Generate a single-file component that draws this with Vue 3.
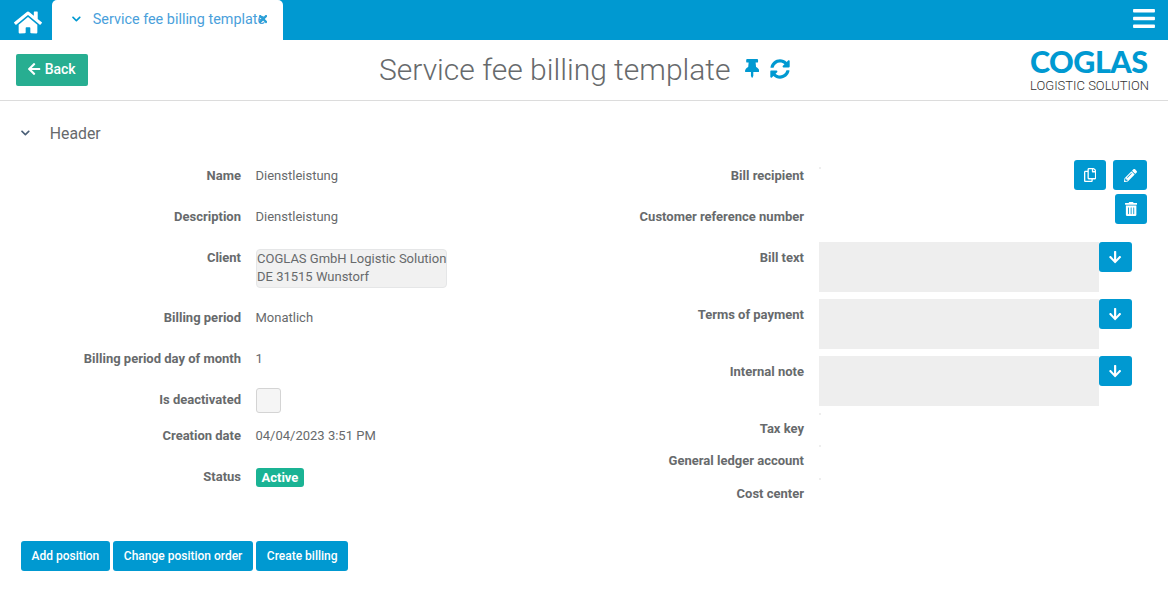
<script setup>
const I = {
  home: [576, 'M280.37 148.26L96 300.11V464a16 16 0 0 0 16 16l112.06-.29a16 16 0 0 0 15.92-16V368a16 16 0 0 1 16-16h64a16 16 0 0 1 16 16v95.64a16 16 0 0 0 16 16.05L464 480a16 16 0 0 0 16-16V300L295.67 148.26a12.19 12.19 0 0 0-15.3 0zM571.6 251.47L488 182.56V44.05a12 12 0 0 0-12-12h-56a12 12 0 0 0-12 12v72.61L318.47 43a48 48 0 0 0-61 0L4.34 251.47a12 12 0 0 0-1.6 16.9l25.5 31A12 12 0 0 0 45.15 301l235.22-193.74a12.19 12.19 0 0 1 15.3 0L530.9 301a12 12 0 0 0 16.9-1.6l25.5-31a12 12 0 0 0-1.7-16.93z'],
  bars: [448, 'M16 132h416c8.837 0 16-7.163 16-16V76c0-8.837-7.163-16-16-16H16C7.163 60 0 67.163 0 76v40c0 8.837 7.163 16 16 16zm0 160h416c8.837 0 16-7.163 16-16v-40c0-8.837-7.163-16-16-16H16c-8.837 0-16 7.163-16 16v40c0 8.837 7.163 16 16 16zm0 160h416c8.837 0 16-7.163 16-16v-40c0-8.837-7.163-16-16-16H16c-8.837 0-16 7.163-16 16v40c0 8.837 7.163 16 16 16z'],
  left: [448, 'M257.5 445.1l-22.2 22.2c-9.4 9.4-24.6 9.4-33.9 0L7 273c-9.4-9.4-9.4-24.6 0-33.9L201.4 44.7c9.4-9.4 24.6-9.4 33.9 0l22.2 22.2c9.5 9.5 9.3 25-.4 34.3L136.6 216H424c13.3 0 24 10.7 24 24v32c0 13.3-10.7 24-24 24H136.6l120.5 114.8c9.8 9.3 10 24.8.4 34.3z'],
  down: [448, 'M413.1 222.5l22.2 22.2c9.4 9.4 9.4 24.6 0 33.9L241 473c-9.4 9.4-24.6 9.4-33.9 0L12.7 278.6c-9.4-9.4-9.4-24.6 0-33.9l22.2-22.2c9.5-9.5 25-9.3 34.3.4L184 343.4V56c0-13.3 10.7-24 24-24h32c13.3 0 24 10.7 24 24v287.4l114.8-120.5c9.3-9.8 24.8-10 34.3-.4z'],
  chev: [448, 'M207.029 381.476L12.686 187.132c-9.373-9.373-9.373-24.569 0-33.941l22.667-22.667c9.357-9.357 24.522-9.375 33.901-.04L224 284.505l154.745-154.021c9.379-9.335 24.544-9.317 33.901.04l22.667 22.667c9.373 9.373 9.373 24.569 0 33.941L240.971 381.476c-9.373 9.372-24.569 9.372-33.942 0z'],
  sync: [512, 'M370.72 133.28C339.458 104.008 298.888 87.962 255.848 88c-77.458.068-144.328 53.178-162.791 126.85-1.344 5.363-6.122 9.15-11.651 9.15H24.103c-7.498 0-13.194-6.807-11.807-14.176C33.933 94.924 134.813 8 256 8c66.448 0 126.791 26.136 171.315 68.685L463.03 40.97C478.149 25.851 504 36.559 504 57.941V192c0 13.255-10.745 24-24 24H345.941c-21.382 0-32.09-25.851-16.971-40.971l41.75-41.749zM32 296h134.059c21.382 0 32.09 25.851 16.971 40.971l-41.75 41.75c31.262 29.273 71.835 45.319 114.876 45.28 77.418-.07 144.315-53.144 162.787-126.849 1.344-5.363 6.122-9.15 11.651-9.15h57.304c7.498 0 13.194 6.807 11.807 14.176C478.067 417.076 377.187 504 256 504c-66.448 0-126.791-26.136-171.315-68.685L48.97 471.03C33.851 486.149 8 475.441 8 454.059V320c0-13.255 10.745-24 24-24z'],
  pin: [384, 'M298.028 214.267L285.793 96H328c13.255 0 24-10.745 24-24V24c0-13.255-10.745-24-24-24H56C42.745 0 32 10.745 32 24v48c0 13.255 10.745 24 24 24h42.207L85.972 214.267C37.465 236.82 0 277.261 0 328c0 13.255 10.745 24 24 24h136v104.007c0 1.242.289 2.467.845 3.578l24 48c2.941 5.882 11.364 5.893 14.311 0l24-48a8.008 8.008 0 0 0 .845-3.578V352h136c13.255 0 24-10.745 24-24-.001-51.183-37.983-91.42-85.973-113.733z'],
  pencil: [512, 'M497.9 142.1l-46.1 46.1c-4.7 4.7-12.3 4.7-17 0l-111-111c-4.7-4.7-4.7-12.3 0-17l46.1-46.1c18.7-18.7 49.1-18.7 67.9 0l60.1 60.1c18.8 18.7 18.8 49.1 0 67.9zM284.2 99.8L21.6 362.4.4 483.9c-2.9 16.4 11.4 30.6 27.8 27.8l121.5-21.3 262.6-262.6c4.7-4.7 4.7-12.3 0-17l-111-111c-4.8-4.7-12.4-4.7-17.1 0zM124.1 339.9c-5.5-5.5-5.5-14.3 0-19.8l154-154c5.5-5.5 14.3-5.5 19.8 0s5.5 14.3 0 19.8l-154 154c-5.5 5.5-14.3 5.5-19.8 0zM88 424h48v36.3l-64.5 11.3-31.1-31.1L51.7 376H88v48z'],
  trash: [448, 'M32 464a48 48 0 0 0 48 48h288a48 48 0 0 0 48-48V128H32zm272-256a16 16 0 0 1 32 0v224a16 16 0 0 1-32 0zm-96 0a16 16 0 0 1 32 0v224a16 16 0 0 1-32 0zm-96 0a16 16 0 0 1 32 0v224a16 16 0 0 1-32 0zM432 32H312l-9.4-18.7A24 24 0 0 0 281.1 0H166.8a23.72 23.72 0 0 0-21.4 13.3L136 32H16A16 16 0 0 0 0 48v32a16 16 0 0 0 16 16h416a16 16 0 0 0 16-16V48a16 16 0 0 0-16-16z'],
  copy: [448, 'M433.941 65.941l-51.882-51.882A48 48 0 0 0 348.118 0H176c-26.51 0-48 21.49-48 48v48H48c-26.51 0-48 21.49-48 48v320c0 26.51 21.49 48 48 48h224c26.51 0 48-21.49 48-48v-48h80c26.51 0 48-21.49 48-48V99.882a48 48 0 0 0-14.059-33.941zM266 464H54a6 6 0 0 1-6-6V150a6 6 0 0 1 6-6h74v224c0 26.51 21.49 48 48 48h96v42a6 6 0 0 1-6 6zm128-96H182a6 6 0 0 1-6-6V54a6 6 0 0 1 6-6h106v88c0 13.255 10.745 24 24 24h88v202a6 6 0 0 1-6 6zm6-256h-64V48h9.632c1.591 0 3.117.632 4.243 1.757l48.368 48.368a6 6 0 0 1 1.757 4.243V112z'],
  times: [352, 'M242.72 256l100.07-100.07c12.28-12.28 12.28-32.19 0-44.48l-22.24-22.24c-12.28-12.28-32.19-12.28-44.48 0L176 189.28 75.93 89.21c-12.28-12.28-32.19-12.28-44.48 0L9.21 111.45c-12.28 12.28-12.28 32.19 0 44.48L109.28 256 9.21 356.07c-12.28 12.28-12.28 32.19 0 44.48l22.24 22.24c12.28 12.28 32.2 12.28 44.48 0L176 322.72l100.07 100.07c12.28 12.28 32.2 12.28 44.48 0l22.24-22.24c12.28-12.28 12.28-32.19 0-44.48L242.72 256z']
}
const vb = (k) => `0 0 ${I[k][0]} 512`
const textRows = ['Bill text', 'Terms of payment', 'Internal note']
const lowerRows = ['Tax key', 'General ledger account', 'Cost center']
</script>

<template>
  <div class="page">
    <div class="topbar">
      <button class="home" type="button" aria-label="Home">
        <svg :viewBox="vb('home')" class="ic-home"><path :d="I.home[1]" /></svg>
      </button>
      <div class="tab">
        <svg :viewBox="vb('chev')" class="ic-tabchev"><path :d="I.chev[1]" /></svg>
        <span class="tab-text">Service fee billing template</span>
        <svg :viewBox="vb('times')" class="ic-tabx"><path :d="I.times[1]" /></svg>
      </div>
      <svg :viewBox="vb('bars')" class="ic-bars"><path :d="I.bars[1]" /></svg>
    </div>

    <header class="head">
      <button class="back" type="button">
        <svg :viewBox="vb('left')" class="ic-back"><path :d="I.left[1]" /></svg>
        <span>Back</span>
      </button>
      <div class="title-wrap">
        <h1>Service fee billing template</h1>
        <svg :viewBox="vb('pin')" class="ic-pin"><path :d="I.pin[1]" /></svg>
        <svg :viewBox="vb('sync')" class="ic-refresh"><path :d="I.sync[1]" /></svg>
      </div>
      <div class="logo">
        <div class="logo-main">COGLAS</div>
        <div class="logo-sub">LOGISTIC SOLUTION</div>
      </div>
    </header>

    <div class="section-head">
      <svg :viewBox="vb('chev')" class="ic-secchev"><path :d="I.chev[1]" /></svg>
      <span>Header</span>
    </div>

    <div class="form">
      <div class="col-left">
        <div class="row"><label>Name</label><span class="val">Dienstleistung</span></div>
        <div class="row"><label>Description</label><span class="val">Dienstleistung</span></div>
        <div class="row row-client">
          <label>Client</label>
          <div class="client">COGLAS GmbH Logistic Solution<br />DE 31515 Wunstorf</div>
        </div>
        <div class="row"><label>Billing period</label><span class="val">Monatlich</span></div>
        <div class="row"><label>Billing period day of month</label><span class="val">1</span></div>
        <div class="row row-check"><label>Is deactivated</label><span class="check"></span></div>
        <div class="row"><label>Creation date</label><span class="val">04/04/2023 3:51 PM</span></div>
        <div class="row"><label>Status</label><span class="badge">Active</span></div>
      </div>

      <div class="col-right">
        <div class="top-block">
          <div class="top-rows">
            <div class="rrow"><label>Bill recipient</label><span class="dot"></span></div>
            <div class="rrow"><label>Customer reference number</label></div>
          </div>
          <div class="actions">
            <button class="sq copy" type="button"><svg :viewBox="vb('copy')"><path :d="I.copy[1]" /></svg></button>
            <button class="sq edit" type="button"><svg :viewBox="vb('pencil')" class="ic-pencil"><path :d="I.pencil[1]" /></svg></button>
            <button class="sq del" type="button"><svg :viewBox="vb('trash')"><path :d="I.trash[1]" /></svg></button>
          </div>
        </div>
        <div v-for="r in textRows" :key="r" class="trow">
          <label>{{ r }}</label>
          <div class="tbox"></div>
          <button class="sq arrow" type="button"><svg :viewBox="vb('down')"><path :d="I.down[1]" /></svg></button>
        </div>
        <div v-for="l in lowerRows" :key="l" class="lrow">
          <label>{{ l }}</label><span class="dot"></span>
        </div>
      </div>
    </div>

    <div class="footer-btns">
      <button type="button">Add position</button>
      <button type="button">Change position order</button>
      <button type="button">Create billing</button>
    </div>
  </div>
</template>

<style>
html, body { margin: 0; background: #fff; }
</style>

<style scoped>
.page {
  width: 1168px;
  height: 590px;
  overflow: hidden;
  font-family: Roboto, "Liberation Sans", sans-serif;
  font-size: 13px;
  color: #676a6c;
  background: #fff;
}
button { font-family: inherit; border: 0; cursor: pointer; padding: 0; }
svg { display: block; fill: currentColor; }
label { font-weight: 700; color: #676a6c; }

.topbar {
  height: 40px;
  background: #0099d1;
  display: flex;
  align-items: flex-start;
  color: #fff;
}
.home { width: 52px; height: 40px; background: transparent; color: #fff; padding: 5px 0 0 14px; box-sizing: border-box; }
.ic-home { width: 28px; height: 25px; }
.tab {
  width: 231px;
  height: 40px;
  background: #fff;
  border-radius: 5px 5px 0 0;
  display: flex;
  align-items: flex-start;
  color: #0099d1;
  position: relative;
}
.ic-tabchev { width: 8.75px; height: 10px; margin: 14px 0 0 20px; flex: none; }
.tab-text { margin: 11px 0 0 12px; font-size: 14.4px; line-height: 17px; color: #4a9fdb; white-space: nowrap; }
.ic-tabx { width: 8.25px; height: 12px; position: absolute; left: 206.5px; top: 13px; color: #2a9fd6; }
.ic-bars { width: 22px; height: 25px; margin: 6px 13px 0 auto; }

.head {
  height: 60px;
  border-bottom: 1px solid #dcdcdc;
  display: flex;
  align-items: flex-start;
}
.back {
  margin: 14px 0 0 16px;
  width: 72px;
  height: 32px;
  background: #27ae91;
  color: #fff;
  border-radius: 2px;
  font-size: 14px;
  font-weight: 500;
  display: flex;
  align-items: center;
  justify-content: center;
  gap: 4px;
  padding-bottom: 2px;
  box-sizing: border-box;
}
.ic-back { width: 12.25px; height: 14px; }
.title-wrap { display: flex; align-items: flex-start; margin: 10px 0 0 291px; height: 40px; }
h1 { margin: 0; font-size: 30px; line-height: 40px; font-weight: 300; color: #676a6c; white-space: nowrap; }
.ic-pin { width: 14.25px; height: 19px; color: #0099d1; margin: 9px 0 0 14px; }
.ic-refresh { width: 20px; height: 20px; color: #0099d1; margin: 9px 0 0 10.75px; }
.logo { margin: 5px 20px 0 auto; width: 118px; }
.logo-main {
  font-family: Lato, sans-serif;
  font-weight: 900;
  font-size: 30.5px;
  line-height: 32px;
  color: #0099d1;
  white-space: nowrap;
  letter-spacing: -0.5px;
}
.logo-sub {
  font-family: Roboto, sans-serif;
  font-weight: 300;
  font-size: 13px;
  line-height: 16px;
  margin-top: 1px;
  color: #333;
  white-space: nowrap;
}

.section-head { display: flex; align-items: center; height: 20px; margin-top: 22px; padding-left: 21px; font-size: 15.8px; }
.ic-secchev { width: 8.75px; height: 10px; color: #4a5f77; }
.section-head span { margin-left: 20px; }

.form { display: flex; margin-top: 11px; height: 387px; }
.col-left { width: 563px; flex: none; }
.row { display: flex; height: 41px; align-items: flex-start; padding-top: 14px; box-sizing: border-box; }
.row label { width: 241px; text-align: right; flex: none; line-height: 15px; }
.val { margin-left: 14.5px; line-height: 15px; white-space: nowrap; }
.row-client { height: 60px; }
.client {
  margin: -1px 0 0 15px;
  width: 191px;
  height: 39px;
  box-sizing: border-box;
  background: #f1f1f1;
  border: 1px solid #e5e6e7;
  border-radius: 4px;
  line-height: 18px;
  white-space: nowrap;
}
.row-check { height: 36px; }
.check {
  margin: -4px 0 0 15px;
  width: 25px;
  height: 25px;
  box-sizing: border-box;
  background: #f5f5f5;
  border: 1px solid #d4d4d4;
  border-radius: 3px;
}
.badge {
  margin: -1px 0 0 15px;
  background: #1ab394;
  color: #fff;
  font-weight: 700;
  padding: 0 5.5px;
  height: 19px;
  line-height: 19px;
  border-radius: 3px;
}

.col-right { flex: 1; min-width: 0; }
.top-block { display: flex; height: 88px; }
.top-rows { width: 300px; flex: none; }
.rrow { height: 41px; display: flex; align-items: flex-start; padding-top: 14px; box-sizing: border-box; }
.rrow label, .trow label, .lrow label { width: 241px; text-align: right; flex: none; line-height: 15px; }
.dot { width: 2px; height: 2px; background: #eee; margin-left: 15px; margin-top: -1px; flex: none; }
.actions {
  margin: 6px 21px 0 auto;
  width: 73px;
  display: flex;
  flex-wrap: wrap;
  justify-content: flex-end;
  column-gap: 7px;
  row-gap: 4px;
  align-content: flex-start;
}
.sq {
  background: #0099d1;
  color: #fff;
  border-radius: 3px;
  display: flex;
  align-items: center;
  justify-content: center;
  height: 30px;
}
.sq svg { width: 12.25px; height: 14px; }
.sq .ic-pencil { width: 13px; height: 13px; }
.copy { width: 32px; }
.edit { width: 34px; }
.del { width: 32px; }
.trow { display: flex; align-items: flex-start; height: 57px; }
.trow label { margin-top: 8px; }
.tbox { margin-left: 15px; width: 280px; height: 50px; background: #eee; flex: none; }
.arrow { width: 33px; }
.lrow { display: flex; align-items: flex-start; height: 32.4px; padding-top: 8px; box-sizing: border-box; }
.lrow .dot { margin-top: -8px; }

.footer-btns { display: flex; gap: 3.5px; margin-left: 21px; }
.footer-btns button {
  height: 30px;
  background: #0099d1;
  color: #fff;
  font-size: 12px;
  font-weight: 500;
  padding: 0 10.5px;
  border-radius: 3px;
}
</style>
